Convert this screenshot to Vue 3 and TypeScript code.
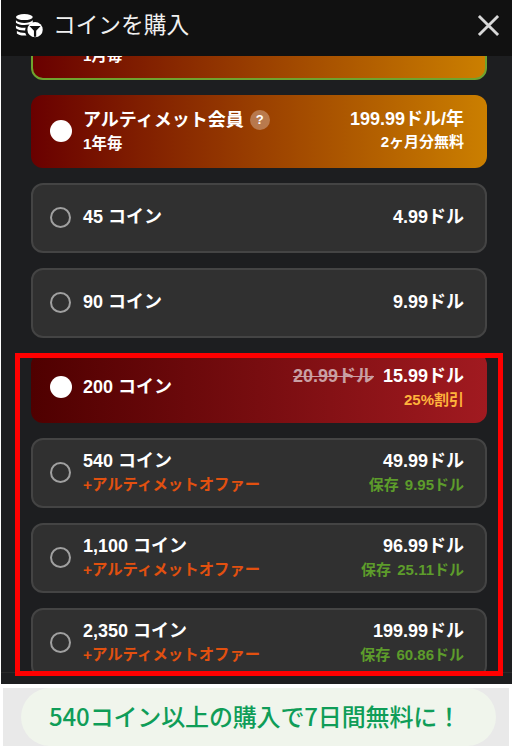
<script setup lang="ts">
interface Plan {
  name: string
  sub?: string
  price: string
  old?: string
  note?: string
  kind: 'ultimate' | 'plain' | 'sale'
  selected?: boolean
  help?: boolean
  current?: boolean
  noteKind?: 'white' | 'gold' | 'green'
}
const plans: Plan[] = [
  { name: 'アルティメット会員', sub: '1月毎', price: '19.99ドル/月', kind: 'ultimate', current: true },
  { name: 'アルティメット会員', sub: '1年毎', price: '199.99ドル/年', note: '2ヶ月分無料', noteKind: 'white', kind: 'ultimate', selected: true, help: true },
  { name: '45 コイン', price: '4.99ドル', kind: 'plain' },
  { name: '90 コイン', price: '9.99ドル', kind: 'plain' },
  { name: '200 コイン', price: '15.99ドル', old: '20.99ドル', note: '25%割引', noteKind: 'gold', kind: 'sale', selected: true },
  { name: '540 コイン', sub: '+アルティメットオファー', price: '49.99ドル', note: '保存 9.95ドル', noteKind: 'green', kind: 'plain' },
  { name: '1,100 コイン', sub: '+アルティメットオファー', price: '96.99ドル', note: '保存 25.11ドル', noteKind: 'green', kind: 'plain' },
  { name: '2,350 コイン', sub: '+アルティメットオファー', price: '199.99ドル', note: '保存 60.86ドル', noteKind: 'green', kind: 'plain' },
]
</script>

<template>
  <div class="page">
    <div class="sheet">
      <header class="head">
        <div class="head-left">
          <svg class="logo" viewBox="0 0 30 26" width="28" height="25">
            <ellipse cx="10" cy="4" rx="9" ry="3.200" fill="#fff" />
            <path d="M1 7.500c2 2 5 2.800 9 2.800s7-.8 9-2.800v2.500c-1.500 1-2.500 1.500-4 2-1.500.3-3 .5-5 .5-4 0-7-.8-9-2.500z" fill="#fff" />
            <path d="M1 13c2 1.800 5 2.500 9 2.500h1.500c-.4.9-.6 1.800-.6 2.900H10c-4 0-7-.8-9-2.400z" fill="#fff" />
            <path d="M2 19c2 1.300 5 2 9 2.100.3 1 .7 1.800 1.300 2.700H10c-4 0-6.700-.8-8-2.200z" fill="#fff" />
            <circle cx="21.500" cy="17.500" r="8.200" fill="#fff" />
            <path d="M15.500 13.500h12l-4.800 5v6.500h-2.400v-6.500z" fill="#111" />
          </svg>
          <h1 class="title">コインを購入</h1>
        </div>
        <svg class="close" viewBox="0 0 24 24" width="23" height="23">
          <path d="M2 2 22 22M22 2 2 22" stroke="#d8d8d8" stroke-width="3" fill="none" />
        </svg>
      </header>

      <main class="scroller">
        <div class="list">
          <div
            v-for="p in plans"
            :key="p.name + p.price"
            class="card"
            :class="[p.kind, { current: p.current }]"
          >
            <span class="radio" :class="{ on: p.selected || p.current }"></span>
            <div class="labels" :class="{ two: p.sub }">
              <div class="name">
                {{ p.name }}
                <span v-if="p.help" class="help">?</span>
              </div>
              <div v-if="p.sub" class="sub" :class="{ offer: p.kind === 'plain' }">{{ p.sub }}</div>
            </div>
            <div class="prices" :class="{ two: p.note }">
              <div class="price">
                <s v-if="p.old" class="old">{{ p.old }}</s>
                {{ p.price }}
              </div>
              <div v-if="p.note" class="note" :class="p.noteKind">{{ p.note }}</div>
            </div>
          </div>
        </div>
      </main>
      <div class="highlight"></div>
    </div>

    <div class="banner">
      <div class="pill">540コイン以上の購入で7日間無料に！</div>
    </div>
  </div>
</template>

<style scoped>
.page {
  width: 512px;
  height: 749px;
  background: #fff;
  font-family: "Liberation Sans", "Noto Sans CJK JP", sans-serif;
  overflow: hidden;
}
.sheet {
  margin-left: 1px;
  height: 684px;
  background: #1d1e20;
  position: relative;
}
.head {
  height: 56px;
  box-sizing: border-box;
  padding: 0 12px 5px 14px;
  background: #111;
  display: flex;
  align-items: center;
  justify-content: space-between;
  position: relative;
  z-index: 2;
}
.head-left {
  display: flex;
  align-items: center;
  gap: 10px;
}
.logo {
  display: block;
}
.title {
  margin: 0;
  padding-bottom: 4px;
  font-size: 22.700px;
  font-weight: 400;
  color: #f0f0f0;
}
.close {
  display: block;
}
.scroller {
  height: 616px;
  overflow: hidden;
  border-bottom: 1px solid #2a2a2a;
}
.list {
  display: flex;
  flex-direction: column;
  gap: 15px;
  margin-top: -49px;
  padding: 0 25px 0 30px;
  width: 456px;
}
.card {
  flex: none;
  height: 70px;
  box-sizing: border-box;
  border-radius: 12px;
  display: flex;
  align-items: center;
  padding: 0 23px 2px 19px;
  color: #fff;
  font-weight: 700;
}
.plain {
  background: #303030;
  border: 2px solid #444;
  padding: 0 21px 2px 17px;
}
.ultimate {
  height: 73px;
  background: linear-gradient(90deg, #690000, #cb7f00);
}
.ultimate .prices {
  margin-bottom: 3px;
}
.ultimate.current {
  border: 2px solid #6fa32f;
  padding: 0 21px 2px 17px;
}
.sale {
  background: linear-gradient(90deg, #4f0000, #a11a20);
}
.radio {
  flex: none;
  width: 17px;
  height: 17px;
  border: 2px solid #a0a0a0;
  border-radius: 50%;
  margin-right: 12px;
}
.radio.on {
  width: 22px;
  height: 22px;
  background: #fff;
  border: none;
  margin-right: 11px;
}
.labels {
  flex: 1;
  min-width: 0;
}
.two {
  padding-top: 2px;
}
.name {
  font-size: 18px;
  line-height: 24px;
  display: flex;
  align-items: center;
  gap: 6px;
}
.help {
  width: 20px;
  height: 20px;
  border-radius: 50%;
  background: rgba(255, 255, 255, 0.3);
  font-size: 13px;
  line-height: 20px;
  text-align: center;
}
.sub {
  font-size: 15.400px;
  line-height: 24px;
}
.sub.offer {
  color: #e2500f;
}
.prices {
  text-align: right;
}
.price {
  font-size: 18px;
  line-height: 24px;
  white-space: nowrap;
}
.old {
  color: #c9a0a4;
  margin-right: 4px;
}
.note {
  font-size: 15px;
  line-height: 24px;
}
.note.white {
  line-height: 22px;
}
.note.gold {
  color: #ffb33c;
}
.note.green {
  color: #5d9c2b;
  word-spacing: 2px;
}
.highlight {
  position: absolute;
  left: 14px;
  top: 353px;
  width: 488px;
  height: 323px;
  box-sizing: border-box;
  border: 5px solid #f00;
  z-index: 1;
}
.banner {
  margin: 4px 3px 0;
  height: 58px;
  padding: 0 13px 0 18px;
  background: #e9e9e9;
  display: flex;
}
.pill {
  flex: 1;
  box-sizing: border-box;
  padding-right: 7px;
  border-radius: 29px;
  background: #f0f5ec;
  color: #0f9d58;
  font-family: "Noto Sans CJK JP", sans-serif;
  font-size: 24px;
  font-weight: 500;
  letter-spacing: -0.15px;
  line-height: 56px;
  text-align: center;
  white-space: nowrap;
}
</style>
